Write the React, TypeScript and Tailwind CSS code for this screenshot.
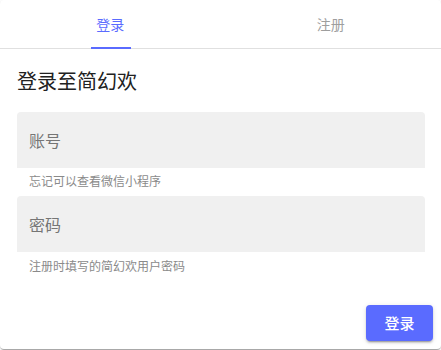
import React from "react";

export default function App() {
  const font = { fontFamily: '"Noto Sans CJK SC", "Noto Sans", sans-serif' };
  return (
    <div className="w-[441px] h-[350px] bg-white" style={font}>
      <div className="w-[441px] h-[349px] bg-white rounded-[4px] shadow-[0_2px_1px_-1px_rgba(0,0,0,0.2),0_1px_1px_0_rgba(0,0,0,0.14),0_1px_3px_0_rgba(0,0,0,0.12)] flex flex-col">
        <div className="flex h-[49px] border-b border-[#e0e0e0]">
          <div className="relative flex-1 flex items-center justify-center text-[14px] text-[#5a6bff]">
            登录
            <div className="absolute bottom-[-1px] left-[91px] w-[40px] h-[2px] bg-[#5a6bff]" />
          </div>
          <div className="flex-1 flex items-center justify-center text-[14px] text-[#9e9e9e]">
            注册
          </div>
        </div>
        <div className="flex flex-col pl-[17px] pr-[16px]">
          <div className="mt-[18px] h-[28px] leading-[28px] text-[20px] text-[#212121]">登录至简幻欢</div>
          <div className="mt-[17px] h-[56px] bg-[#f0f0f0] rounded-t-[4px] flex items-center px-3 text-[16px] text-[#757575]">账号</div>
          <div className="mt-[3px] pl-3 text-[12px] leading-[20px] text-[#8a8a8a]">忘记可以查看微信小程序</div>
          <div className="mt-[5px] h-[56px] bg-[#f0f0f0] rounded-t-[4px] flex items-center px-3 text-[16px] text-[#757575]">密码</div>
          <div className="mt-[4px] pl-3 text-[12px] leading-[20px] text-[#8a8a8a]">注册时填写的简幻欢用户密码</div>
        </div>
        <div className="flex justify-end pr-[8px] mt-[29px]">
          <button className="w-[67px] h-[36px] rounded-[4px] bg-[#5a6bff] text-white text-[15px] font-medium shadow-[0_3px_1px_-2px_rgba(0,0,0,0.2),0_2px_2px_0_rgba(0,0,0,0.14),0_1px_5px_0_rgba(0,0,0,0.12)]">
            登录
          </button>
        </div>
      </div>
    </div>
  );
}
